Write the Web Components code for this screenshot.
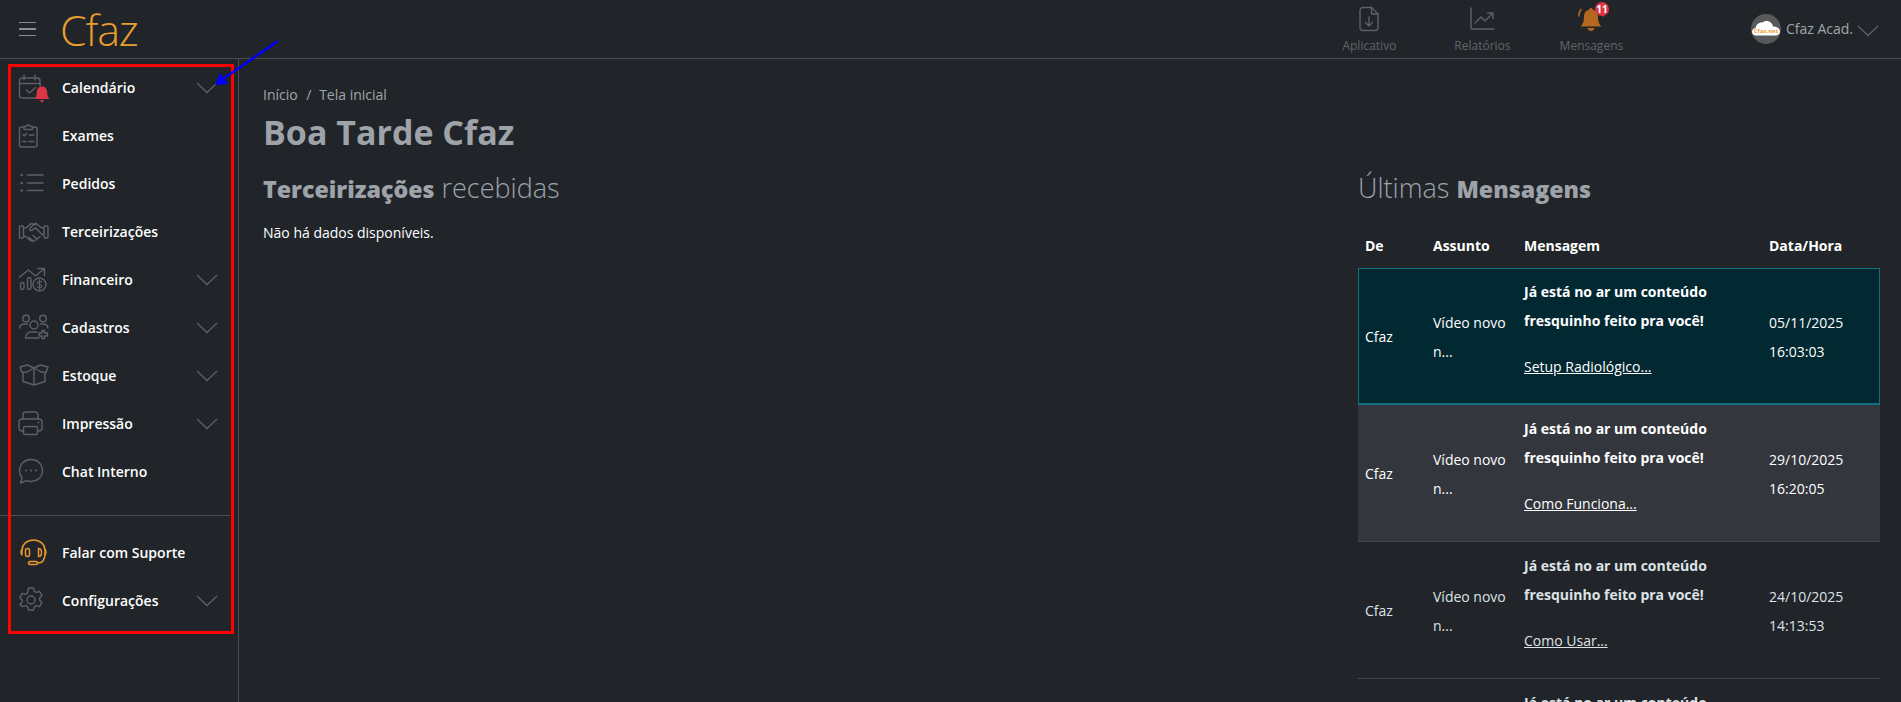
<!DOCTYPE html>
<html lang="pt-BR">
<head>
<meta charset="utf-8">
<title>Cfaz</title>
<style>
html, body { margin: 0; height: 100%; overflow: hidden; background: #212529; }
body { font-family: "Open Sans", "Noto Sans", sans-serif; font-size: 14px; color: #fff; }
svg { display: block; }
</style>
</head>
<body>

<app-shell>
    <app-header slot="header"></app-header>

    <side-nav slot="nav">
        <nav-item expand>
            <svg slot="icon" viewBox="0 0 34 34" fill="none" stroke="#5c6168" stroke-width="1.4" stroke-linecap="round" stroke-linejoin="round">
                <path d="M17 27H4a2.500 2.500 0 0 1-2.500-2.500V9.500A2.500 2.500 0 0 1 4 7h15.500A2.500 2.500 0 0 1 22 9.500V15"/>
                <path d="M6 4v5M17 4v5M1.500 12.500H22M8.500 19l3 3 6-5.500"/>
                <path d="M24 15.500c3.500 0 5.200 2.700 5.200 6 0 3.200.8 4.700 2.300 6.500H16.500c1.500-1.800 2.300-3.300 2.300-6.500 0-3.300 1.700-6 5.200-6z" fill="#dc3545" stroke="none"/>
                <path d="M21.300 29.200h5.400l-2.700 2.600z" fill="#dc3545" stroke="none"/>
            </svg>
            Calendário
        </nav-item>
        <nav-item>
            <svg slot="icon" viewBox="0 0 34 34" fill="none" stroke="#5c6168" stroke-width="1.4" stroke-linecap="round" stroke-linejoin="round">
                <path d="M6 8H3.500a2 2 0 0 0-2 2v16a2 2 0 0 0 2 2h13.500a2 2 0 0 0 2-2V10a2 2 0 0 0-2-2H14.500"/>
                <path d="M6 10.500V8l2.500-1a2 2 0 0 1 3.500 0l2.500 1v2.500z"/>
                <path d="M5 15.500l1.300 1.300L8.500 14.500M11 16h5M5 22.500h3M11 22.500h5"/>
            </svg>
            Exames
        </nav-item>
        <nav-item>
            <svg slot="icon" viewBox="0 0 34 34" fill="none" stroke="#5c6168" stroke-width="1.4" stroke-linecap="round">
                <path d="M9.500 8H25M9.500 16H25M9.500 23.500H25"/>
                <circle cx="3.700" cy="8" r="1.300" fill="#5c6168" stroke="none"/>
                <circle cx="3.700" cy="16" r="1.300" fill="#5c6168" stroke="none"/>
                <circle cx="3.700" cy="23.500" r="1.300" fill="#5c6168" stroke="none"/>
            </svg>
            Pedidos
        </nav-item>
        <nav-item>
            <svg slot="icon" viewBox="0 0 34 34" fill="none" stroke="#5c6168" stroke-width="1.4" stroke-linecap="round" stroke-linejoin="round">
                <rect x="1.500" y="11" width="4" height="12" rx="1"/>
                <rect x="26" y="11" width="4" height="12" rx="1"/>
                <path d="M5.500 13l3-.5 4.500-4 4.500 1.500"/>
                <path d="M26 13l-3-.5-5.500-4.500-5 4.500-1 2.500c1.500 1 3 .5 4-1l2.500-1 6 6.500 2-.5"/>
                <path d="M5.500 21l2 .5 5 4c1.500 1 3 1 4.500 0l5-4M11 22.500l3.500 3M15 20.500l4 3.500"/>
            </svg>
            Terceirizações
        </nav-item>
        <nav-item expand>
            <svg slot="icon" viewBox="0 0 34 34" fill="none" stroke="#5c6168" stroke-width="1.4" stroke-linecap="round" stroke-linejoin="round">
                <path d="M1.500 14l9-7 7 6 9-7.500M19.500 5.500h7v7"/>
                <rect x="2.500" y="19.500" width="3.500" height="7" rx="1.700"/>
                <rect x="9.500" y="14.500" width="3.500" height="12" rx="1.700"/>
                <circle cx="21.500" cy="21.500" r="6.500"/>
                <path d="M23.500 19.300c-.5-.8-1.200-1.100-2-1.100-1.200 0-2 .6-2 1.600 0 2.200 4.200 1.200 4.200 3.500 0 1-.9 1.600-2.200 1.600-.9 0-1.700-.4-2.200-1.200M21.500 16.800v9.400" stroke-width="1.100"/>
            </svg>
            Financeiro
        </nav-item>
        <nav-item expand>
            <svg slot="icon" viewBox="0 0 34 34" fill="none" stroke="#5c6168" stroke-width="1.4" stroke-linecap="round" stroke-linejoin="round">
                <circle cx="8" cy="7.500" r="3.300"/>
                <circle cx="25" cy="7.500" r="3.300"/>
                <circle cx="16" cy="14" r="4"/>
                <path d="M1.500 17c.5-2.500 2.500-4 5-4h3M22.500 13h3c2.500 0 4 1.500 4.500 4"/>
                <path d="M7.500 27c0-3.500 2.500-6 5.500-6h6"/>
                <path d="M7.500 27H21"/>
                <path d="M24 19.500h2.500v2.500H29.500v3H26.500v2.500H24V25h-3v-3h3z"/>
            </svg>
            Cadastros
        </nav-item>
        <nav-item expand>
            <svg slot="icon" viewBox="0 0 34 34" fill="none" stroke="#5c6168" stroke-width="1.4" stroke-linecap="round" stroke-linejoin="round">
                <path d="M2 8l7.500-2 6.500 3 6.500-3L30 8l-2 5.500-5-.5-7-4-7 4-5 .5z"/>
                <path d="M5 13.500V22.500L16 26l11-3.500V13.500M16 9v17"/>
            </svg>
            Estoque
        </nav-item>
        <nav-item expand>
            <svg slot="icon" viewBox="0 0 34 34" fill="none" stroke="#5c6168" stroke-width="1.4" stroke-linecap="round" stroke-linejoin="round">
                <path d="M5 12V8a3 3 0 0 1 3-3h9a3 3 0 0 1 3 3v4"/>
                <path d="M5.500 24H4a3 3 0 0 1-3-3v-6a3 3 0 0 1 3-3h17a3 3 0 0 1 3 3v6a3 3 0 0 1-3 3h-1.500"/>
                <rect x="5.500" y="19.500" width="14" height="8" rx="1.500"/>
                <path d="M20 15.500h.8"/>
            </svg>
            Impressão
        </nav-item>
        <nav-item>
            <svg slot="icon" viewBox="0 0 34 34" fill="none" stroke="#5c6168" stroke-width="1.4" stroke-linecap="round" stroke-linejoin="round">
                <path d="M13 4.500c6.500 0 11.500 4.700 11.500 11s-5 11-11.500 11c-1.600 0-3.100-.3-4.500-.8L2.500 28l1.600-5C2.400 21 1.500 18.400 1.500 15.500c0-6.300 5-11 11.500-11z"/>
                <path d="M8 15.500h.1M13 15.500h.1M18 15.500h.1" stroke-width="2"/>
            </svg>
            Chat Interno
        </nav-item>

        <nav-item slot="bottom">
            <svg slot="icon" viewBox="0 0 34 34" fill="none" stroke="#e8952f" stroke-width="1.500" stroke-linecap="round" stroke-linejoin="round">
                <path d="M4 17.500V14a11.500 10 0 0 1 23 0v3.500c0 3-1 6-2 7.500s-3 2-5 2"/>
                <path d="M4 13.500c-1.300 1.200-1.300 4 0 5.500M27 13.500c1.300 1.200 1.300 4 0 5.500"/>
                <rect x="7.500" y="12.500" width="4" height="8" rx="2"/>
                <path d="M20.500 12.500c2 0 3 1.500 3 4s-1 4-3 4z"/>
                <rect x="10.500" y="25.500" width="9" height="3" rx="1.500"/>
            </svg>
            Falar com Suporte
        </nav-item>
        <nav-item slot="bottom" expand>
            <svg slot="icon" viewBox="0 0 34 34" fill="none" stroke="#5c6168" stroke-width="1.400" stroke-linecap="round" stroke-linejoin="round">
                <circle cx="13" cy="16" r="4"/>
                <path d="M10.500 4h5l.8 3.200 2 1.100 3.200-1 2.500 4.300-2.400 2.300v2.200l2.400 2.300-2.500 4.300-3.200-1-2 1.100-.8 3.200h-5l-.8-3.200-2-1.100-3.200 1L1.800 20.400l2.400-2.300v-2.200l-2.400-2.300 2.500-4.300 3.200 1 2-1.100z"/>
            </svg>
            Configurações
        </nav-item>
    </side-nav>

    <home-page slot="main"></home-page>
</app-shell>

<shot-notes></shot-notes>

<script>
const chevron = `<svg width="22" height="12" viewBox="0 0 22 12" fill="none" stroke="#5c6168" stroke-width="1.300"><path d="M1 1l10 9.500L21 1"/></svg>`;

const shellTemplate = document.createElement('template');
shellTemplate.innerHTML = `
<style>
:host { display: grid; grid-template-columns: 239px 1fr; grid-template-rows: 59px 1fr; height: 100vh; overflow: hidden; }
.top { grid-column: 1 / 3; }
.side { border-right: 1px solid #4a4d52; }
.main { min-width: 0; overflow: hidden; }
</style>
<div class="top"><slot name="header"></slot></div>
<div class="side"><slot name="nav"></slot></div>
<div class="main"><slot name="main"></slot></div>
`;

class AppShell extends HTMLElement {
    constructor() {
        super();
        this.attachShadow({mode: 'open'});
        this.shadowRoot.appendChild(shellTemplate.content.cloneNode(true));
    }
}

const headerTemplate = document.createElement('template');
headerTemplate.innerHTML = `
<style>
:host { display: flex; align-items: center; height: 59px; box-sizing: border-box; border-bottom: 1px solid #4a4d52; padding: 0 22px 0 19px; }
.burger { width: 17px; display: flex; flex-direction: column; gap: 5px; margin-right: 24px; }
.burger i { display: block; height: 1.500px; background: #8a8f95; }
.logo { font-weight: 300; font-size: 43px; letter-spacing: -1.200px; line-height: 58px; color: #e89f2e; padding-top: 2px; }
.actions { margin-left: auto; display: flex; align-items: flex-start; height: 58px; }
.user { display: flex; align-items: center; margin-left: 127px; color: #a0a5ab; font-size: 14px; }
.avatar { width: 30px; height: 30px; border-radius: 50%; background: #58595b; margin-right: 5px; }
.avatar text { font-family: "Open Sans", sans-serif; font-size: 6px; font-weight: 700; fill: #f0a02e; }
.name { margin-right: 4px; padding-bottom: 2px; }
.user svg:last-child { margin-top: 3px; }
</style>
<div class="burger"><i></i><i></i><i></i></div>
<div class="logo">Cfaz</div>
<div class="actions">
    <header-action style="width:55px">
        <svg slot="icon" width="20" height="26" viewBox="0 0 20 26" fill="none" stroke="#5c6168" stroke-width="1.400" stroke-linecap="round" stroke-linejoin="round">
            <path d="M12.500 1.500H4a3 3 0 0 0-3 3v17a3 3 0 0 0 3 3h12a3 3 0 0 0 3-3V8z"/>
            <path d="M12.500 1.500V8H19M10 11v9M6.500 16.500L10 20l3.500-3.500"/>
        </svg>
        Aplicativo
    </header-action>
    <header-action style="width:57px;margin-left:57px">
        <svg slot="icon" width="26" height="24" viewBox="0 0 26 24" fill="none" stroke="#5c6168" stroke-width="1.400" stroke-linecap="round" stroke-linejoin="round">
            <path d="M2 1v20a1 1 0 0 0 1 1h22"/>
            <path d="M6 16l6-6 4 4 8-8M18.500 6H24v5.500"/>
        </svg>
        Relatórios
    </header-action>
    <header-action style="width:65px;margin-left:48px">
        <svg slot="icon" width="26" height="26" viewBox="0 0 26 26" fill="#b5661f" stroke="none">
            <path d="M13 2c.9 0 1.600.6 1.700 1.500 3.500.8 5.300 3.700 5.300 7.200 0 5 1.200 7 3.300 9.800H2.700c2.100-2.800 3.300-4.800 3.300-9.800 0-3.500 1.800-6.400 5.300-7.200C11.400 2.600 12.100 2 13 2z"/>
            <path d="M9.500 22h7c-.5 1.800-2 3-3.500 3s-3-1.200-3.500-3z"/>
            <path d="M3.500 3C1.500 5 .7 7.500.8 10.500M22.500 3c2 2 2.800 4.500 2.700 7.500" fill="none" stroke="#b5661f" stroke-width="1.500"/>
        </svg>
        <span slot="badge">11</span>
        Mensagens
    </header-action>
</div>
<div class="user">
    <svg class="avatar" viewBox="0 0 30 30">
        <path d="M5 21.500c-2.500 0-4-1.700-4-3.700 0-2 1.500-3.500 3.500-3.800C5 10.500 8 8 11.500 8.500c1.200-1 2.500-1.500 4-1.500 3.500 0 6 2.400 6.500 5.500 3.500 0 7 1.800 7 5 0 2.300-2 4-4.500 4z" fill="#fff"/>
        <text x="15" y="19" text-anchor="middle">Cfaz.net</text>
    </svg>
    <span class="name">Cfaz Acad.</span>
    ${chevron}
</div>
`;

class AppHeader extends HTMLElement {
    constructor() {
        super();
        this.attachShadow({mode: 'open'});
        this.shadowRoot.appendChild(headerTemplate.content.cloneNode(true));
    }
}

const actionTemplate = document.createElement('template');
actionTemplate.innerHTML = `
<style>
:host { display: flex; flex-direction: column; align-items: center; position: relative; padding-top: 5px; font-size: 12px; line-height: 16px; color: #5f6469; white-space: nowrap; }
.icon { height: 28px; display: flex; align-items: center; justify-content: center; margin-bottom: 5px; }
::slotted([slot=badge]) { position: absolute; top: 2px; left: 36px; width: 14px; height: 14px; border-radius: 50%; background: #dc3545; color: #fff; font-size: 10px; font-weight: 700; line-height: 14px; text-align: center; }
</style>
<div class="icon"><slot name="icon"></slot></div>
<slot name="badge"></slot>
<slot></slot>
`;

class HeaderAction extends HTMLElement {
    constructor() {
        super();
        this.attachShadow({mode: 'open'});
        this.shadowRoot.appendChild(actionTemplate.content.cloneNode(true));
    }
}

const navTemplate = document.createElement('template');
navTemplate.innerHTML = `
<style>
:host { display: block; padding-top: 5px; }
.sep { height: 1px; width: 230px; background: #4a4d52; margin: 19px 0 13px; }
</style>
<slot></slot>
<div class="sep"></div>
<slot name="bottom"></slot>
`;

class SideNav extends HTMLElement {
    constructor() {
        super();
        this.attachShadow({mode: 'open'});
        this.shadowRoot.appendChild(navTemplate.content.cloneNode(true));
    }
}

const itemTemplate = document.createElement('template');
itemTemplate.innerHTML = `
<style>
:host { display: flex; align-items: center; height: 48px; padding-left: 18px; font-weight: 600; font-size: 14px; color: #fff; }
::slotted(svg) { width: 34px; height: 34px; }
.label { margin-left: 10px; flex: 1; padding-bottom: 2px; }
.chev { display: none; margin: 1px 20px 0 0; }
:host([expand]) .chev { display: block; }
</style>
<slot name="icon"></slot>
<span class="label"><slot></slot></span>
<span class="chev">${chevron}</span>
`;

class NavItem extends HTMLElement {
    constructor() {
        super();
        this.attachShadow({mode: 'open'});
        this.shadowRoot.appendChild(itemTemplate.content.cloneNode(true));
    }
}

const pageTemplate = document.createElement('template');
pageTemplate.innerHTML = `
<style>
:host { display: block; padding: 26px 21px 0 24px; }
.crumb { font-size: 14px; line-height: 20px; color: #a0a5ab; }
.crumb span { margin: 0 4px 0 5px; }
h1 { margin: 5px 0 18px; font-size: 34px; line-height: 44px; font-weight: 700; color: #9da3a9; }
.cols { display: grid; grid-template-columns: 1fr 522px; }
h2 { margin: 0; font-size: 27px; line-height: 32px; font-weight: 300; color: #9da3a9; }
h2 b { font-size: 23.200px; font-weight: 800; }
p { margin: 18px 0 0; line-height: 20px; color: #fff; }
</style>
<div class="crumb">Início<span> / </span>Tela inicial</div>
<h1>Boa Tarde Cfaz</h1>
<div class="cols">
    <section>
        <h2><b>Terceirizações</b> recebidas</h2>
        <p>Não há dados disponíveis.</p>
    </section>
    <section>
        <h2>Últimas <b>Mensagens</b></h2>
        <msg-table>
            <msg-row kind="active" from="Cfaz" subject="Vídeo novo n..." link="Setup Radiológico..." date="05/11/2025 16:03:03"></msg-row>
            <msg-row kind="hover" from="Cfaz" subject="Vídeo novo n..." link="Como Funciona..." date="29/10/2025 16:20:05"></msg-row>
            <msg-row from="Cfaz" subject="Vídeo novo n..." link="Como Usar..." date="24/10/2025 14:13:53"></msg-row>
            <msg-row from="Cfaz" subject="Vídeo novo n..."></msg-row>
        </msg-table>
    </section>
</div>
`;

class HomePage extends HTMLElement {
    constructor() {
        super();
        this.attachShadow({mode: 'open'});
        this.shadowRoot.appendChild(pageTemplate.content.cloneNode(true));
    }
}

const tableTemplate = document.createElement('template');
tableTemplate.innerHTML = `
<style>
:host { display: block; margin-top: 31px; --cols: 68px 91px 245px 1fr; }
.head { display: grid; grid-template-columns: var(--cols); height: 32px; font-weight: 700; line-height: 20px; color: #fff; }
.head div { padding-left: 7px; }
</style>
<div class="head"><div>De</div><div>Assunto</div><div>Mensagem</div><div>Data/Hora</div></div>
<slot></slot>
`;

class MsgTable extends HTMLElement {
    constructor() {
        super();
        this.attachShadow({mode: 'open'});
        this.shadowRoot.appendChild(tableTemplate.content.cloneNode(true));
    }
}

class MsgRow extends HTMLElement {
    constructor() {
        super();
        this.attachShadow({mode: 'open'});
        const link = this.getAttribute('link');
        const date = this.getAttribute('date');
        this.shadowRoot.innerHTML = `
<style>
:host { display: grid; grid-template-columns: var(--cols); align-items: center; height: 137px; box-sizing: border-box; border-bottom: 1px solid #44474c; color: #dee2e6; line-height: 29px; }
:host([kind=active]) { background: #022832; box-shadow: inset 0 0 0 1px #14707f; border-bottom-color: #14707f; color: #fff; }
:host([kind=hover]) { background: #33363c; color: #fff; }
.cell { padding: 0 8px 0 7px; }
.shift { padding-top: 2px; }
.msg { align-self: start; padding-top: 9px; }
.msg b { display: block; font-weight: 700; line-height: 29px; }
.msg a { display: block; margin-top: 22px; line-height: 20px; color: inherit; text-decoration: underline; }
</style>
<div class="cell">${this.getAttribute('from')}</div>
<div class="cell shift">${this.getAttribute('subject')}</div>
<div class="cell msg"><b>Já está no ar um conteúdo fresquinho feito pra você!</b>${link ? `<a>${link}</a>` : ''}</div>
<div class="cell shift">${date || ''}</div>
`;
    }
}

const notesTemplate = document.createElement('template');
notesTemplate.innerHTML = `
<style>
:host { position: absolute; left: 0; top: 0; width: 100%; height: 100%; pointer-events: none; }
.box { position: absolute; left: 8px; top: 64px; width: 226px; height: 570px; box-sizing: border-box; border: 3.500px solid #f00; }
svg { position: absolute; left: 205px; top: 35px; }
</style>
<div class="box"></div>
<svg width="80" height="60" viewBox="0 0 80 60" fill="#00f" stroke="#00f">
    <path d="M73 6L18 44" stroke-width="2.500" fill="none"/>
    <path d="M10 50l5-12 8 11z" stroke="none"/>
</svg>
`;

class ShotNotes extends HTMLElement {
    constructor() {
        super();
        this.attachShadow({mode: 'open'});
        this.shadowRoot.appendChild(notesTemplate.content.cloneNode(true));
    }
}

window.customElements.define('app-shell', AppShell);
window.customElements.define('app-header', AppHeader);
window.customElements.define('header-action', HeaderAction);
window.customElements.define('side-nav', SideNav);
window.customElements.define('nav-item', NavItem);
window.customElements.define('home-page', HomePage);
window.customElements.define('msg-table', MsgTable);
window.customElements.define('msg-row', MsgRow);
window.customElements.define('shot-notes', ShotNotes);
</script>
</body>
</html>
